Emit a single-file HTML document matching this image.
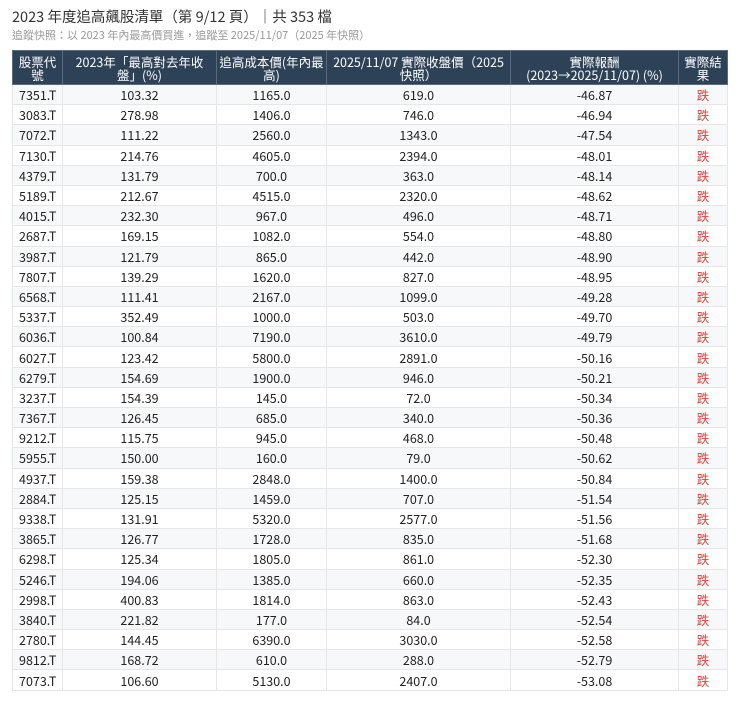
<!DOCTYPE html>
<html><head><meta charset="utf-8"><style>
body{margin:0;background:#fff;font-family:"Noto Sans CJK TC",sans-serif;color:#222;}
.t{position:absolute;left:12px;top:7px;font-size:14.5px;line-height:20px;color:#333;}
.s{position:absolute;left:12px;top:28px;font-size:11px;line-height:15px;color:#999;}
table{position:absolute;left:12px;top:50px;border-collapse:collapse;width:715px;table-layout:fixed;font-size:12.5px;}
th{background:#2e4257;color:#fff;font-weight:normal;line-height:13px;height:33px;padding:0 6px;border:1px solid #5a6b7c;text-align:center;font-size:12.5px;}
td{height:19.2px;padding:0;border:1px solid #e6e6e6;text-align:center;line-height:19px;}
td:first-child{text-align:left;padding-left:6px;}
tr:nth-child(even) td{background:#f7f8fa;}
td.r{color:#d9453b;}
</style></head><body>
<div class="t">2023 年度追高飆股清單（第 9/12 頁）｜共 353 檔</div>
<div class="s">追蹤快照：以 2023 年內最高價買進，追蹤至 2025/11/07（2025 年快照）</div>
<table>
<colgroup><col style="width:50px"><col style="width:154px"><col style="width:110px"><col style="width:184px"><col style="width:168px"><col style="width:49px"></colgroup>
<tr><th style="padding:0 2px">股票代號</th><th style="padding:0 7px">2023年「最高對去年收盤」(%)</th><th style="padding:0 1px">追高成本價(年內最高)</th><th>2025/11/07 實際收盤價（2025快照）</th><th>實際報酬<br>(2023→2025/11/07) (%)</th><th style="padding:0 2px">實際結果</th></tr>
<tr><td>7351.T</td><td>103.32</td><td>1165.0</td><td>619.0</td><td>-46.87</td><td class="r">跌</td></tr>
<tr><td>3083.T</td><td>278.98</td><td>1406.0</td><td>746.0</td><td>-46.94</td><td class="r">跌</td></tr>
<tr><td>7072.T</td><td>111.22</td><td>2560.0</td><td>1343.0</td><td>-47.54</td><td class="r">跌</td></tr>
<tr><td>7130.T</td><td>214.76</td><td>4605.0</td><td>2394.0</td><td>-48.01</td><td class="r">跌</td></tr>
<tr><td>4379.T</td><td>131.79</td><td>700.0</td><td>363.0</td><td>-48.14</td><td class="r">跌</td></tr>
<tr><td>5189.T</td><td>212.67</td><td>4515.0</td><td>2320.0</td><td>-48.62</td><td class="r">跌</td></tr>
<tr><td>4015.T</td><td>232.30</td><td>967.0</td><td>496.0</td><td>-48.71</td><td class="r">跌</td></tr>
<tr><td>2687.T</td><td>169.15</td><td>1082.0</td><td>554.0</td><td>-48.80</td><td class="r">跌</td></tr>
<tr><td>3987.T</td><td>121.79</td><td>865.0</td><td>442.0</td><td>-48.90</td><td class="r">跌</td></tr>
<tr><td>7807.T</td><td>139.29</td><td>1620.0</td><td>827.0</td><td>-48.95</td><td class="r">跌</td></tr>
<tr><td>6568.T</td><td>111.41</td><td>2167.0</td><td>1099.0</td><td>-49.28</td><td class="r">跌</td></tr>
<tr><td>5337.T</td><td>352.49</td><td>1000.0</td><td>503.0</td><td>-49.70</td><td class="r">跌</td></tr>
<tr><td>6036.T</td><td>100.84</td><td>7190.0</td><td>3610.0</td><td>-49.79</td><td class="r">跌</td></tr>
<tr><td>6027.T</td><td>123.42</td><td>5800.0</td><td>2891.0</td><td>-50.16</td><td class="r">跌</td></tr>
<tr><td>6279.T</td><td>154.69</td><td>1900.0</td><td>946.0</td><td>-50.21</td><td class="r">跌</td></tr>
<tr><td>3237.T</td><td>154.39</td><td>145.0</td><td>72.0</td><td>-50.34</td><td class="r">跌</td></tr>
<tr><td>7367.T</td><td>126.45</td><td>685.0</td><td>340.0</td><td>-50.36</td><td class="r">跌</td></tr>
<tr><td>9212.T</td><td>115.75</td><td>945.0</td><td>468.0</td><td>-50.48</td><td class="r">跌</td></tr>
<tr><td>5955.T</td><td>150.00</td><td>160.0</td><td>79.0</td><td>-50.62</td><td class="r">跌</td></tr>
<tr><td>4937.T</td><td>159.38</td><td>2848.0</td><td>1400.0</td><td>-50.84</td><td class="r">跌</td></tr>
<tr><td>2884.T</td><td>125.15</td><td>1459.0</td><td>707.0</td><td>-51.54</td><td class="r">跌</td></tr>
<tr><td>9338.T</td><td>131.91</td><td>5320.0</td><td>2577.0</td><td>-51.56</td><td class="r">跌</td></tr>
<tr><td>3865.T</td><td>126.77</td><td>1728.0</td><td>835.0</td><td>-51.68</td><td class="r">跌</td></tr>
<tr><td>6298.T</td><td>125.34</td><td>1805.0</td><td>861.0</td><td>-52.30</td><td class="r">跌</td></tr>
<tr><td>5246.T</td><td>194.06</td><td>1385.0</td><td>660.0</td><td>-52.35</td><td class="r">跌</td></tr>
<tr><td>2998.T</td><td>400.83</td><td>1814.0</td><td>863.0</td><td>-52.43</td><td class="r">跌</td></tr>
<tr><td>3840.T</td><td>221.82</td><td>177.0</td><td>84.0</td><td>-52.54</td><td class="r">跌</td></tr>
<tr><td>2780.T</td><td>144.45</td><td>6390.0</td><td>3030.0</td><td>-52.58</td><td class="r">跌</td></tr>
<tr><td>9812.T</td><td>168.72</td><td>610.0</td><td>288.0</td><td>-52.79</td><td class="r">跌</td></tr>
<tr><td>7073.T</td><td>106.60</td><td>5130.0</td><td>2407.0</td><td>-53.08</td><td class="r">跌</td></tr>
</table>
</body></html>
